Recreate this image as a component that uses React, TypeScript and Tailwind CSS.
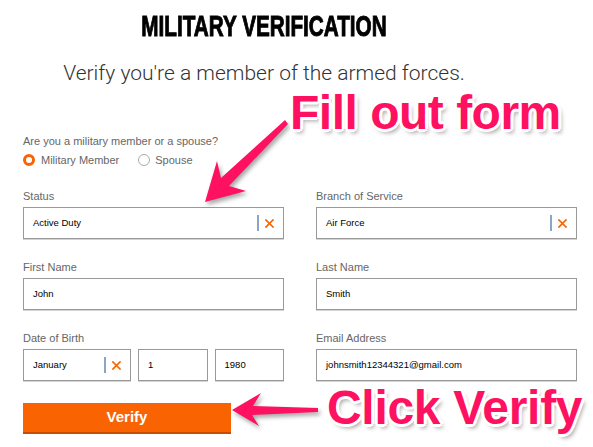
import React from "react";

const ORANGE = "#f96302";

function ClearX({ className = "" }: { className?: string }) {
  return (
    <svg width="9" height="9" viewBox="0 0 9 9" className={className}>
      <path d="M1 1 L8 8 M8 1 L1 8" stroke={ORANGE} strokeWidth="1.7" strokeLinecap="square" />
    </svg>
  );
}

function Field({
  label,
  value,
  clear,
}: {
  label: string;
  value: string;
  clear?: boolean;
}) {
  return (
    <div className="flex flex-col">
      <div className="text-[11px] leading-[14px] text-[#666] mb-[4px]">{label}</div>
      <Box value={value} clear={clear} />
    </div>
  );
}

function Box({ value, clear, className = "" }: { value: string; clear?: boolean; className?: string }) {
  return (
    <div
      className={`h-[32px] border border-[#999] shadow-[0_1px_0_#d4d4d4] flex items-center pl-[9px] pr-[9px] bg-white ${className}`}
    >
      <span className="flex-1 text-[9.5px] text-black">{value}</span>
      {clear && (
        <div className="flex items-center gap-[6px]">
          <div className="w-[2px] h-[16px] bg-[#8ba6c4]" />
          <ClearX />
        </div>
      )}
    </div>
  );
}

export default function App() {
  const annot =
    "[text-shadow:3px_0_0_#fff,-3px_0_0_#fff,0_3px_0_#fff,0_-3px_0_#fff,2px_2px_0_#fff,-2px_-2px_0_#fff,2px_-2px_0_#fff,-2px_2px_0_#fff,3px_4px_4px_rgba(0,0,0,0.35)]";
  return (
    <div
      className="relative w-[593px] h-[447px] bg-white overflow-hidden"
      style={{ fontFamily: '"Liberation Sans", Arial, sans-serif' }}
    >
      <div className="pl-[23px] pt-[9px]">
        <div className="w-[482px] text-center">
          <div className="text-[30px] leading-[34px] font-bold text-black scale-x-[0.69] whitespace-nowrap [-webkit-text-stroke:1px_black]">
            MILITARY VERIFICATION
          </div>
          <div
            className="mt-[18px] text-[21px] leading-[24px] text-[#333] font-light"
            style={{ fontFamily: 'Roboto, "Liberation Sans", sans-serif' }}
          >
            Verify you're a member of the armed forces.
          </div>
        </div>

        <div className="mt-[49px] text-[11px] leading-[14px] text-[#666]">
          Are you a military member or a spouse?
        </div>
        <div className="mt-[4px] flex items-center h-[16px] text-[11px] text-[#666]">
          <div className="w-[12px] h-[12px] rounded-full border-[3.5px] border-[#f96302] bg-white" />
          <span className="ml-[6px]">Military Member</span>
          <div className="ml-[19px] w-[12px] h-[12px] rounded-full border border-[#aaa] bg-white" />
          <span className="ml-[5px]">Spouse</span>
        </div>

        <div className="mt-[21px] grid grid-cols-[261px_261px] gap-x-[32px] gap-y-[21px]">
          <Field label="Status" value="Active Duty" clear />
          <Field label="Branch of Service" value="Air Force" clear />
          <Field label="First Name" value="John" />
          <Field label="Last Name" value="Smith" />
          <div className="flex flex-col">
            <div className="text-[11px] leading-[14px] text-[#666] mb-[4px]">Date of Birth</div>
            <div className="flex gap-[7px]">
              <Box value="January" clear className="w-[109px]" />
              <Box value="1" className="w-[70px]" />
              <Box value="1980" className="w-[70px]" />
            </div>
          </div>
          <Field label="Email Address" value="johnsmith12344321@gmail.com" />
        </div>

        <button className="mt-[22px] w-[208px] h-[31px] bg-[#f96302] border-b-[2px] border-[#c54e00] text-white font-bold text-[15px] flex items-center justify-center">
          Verify
        </button>
      </div>

      {/* annotations */}
      <svg
        className="absolute inset-0 pointer-events-none drop-shadow-[2px_3px_2px_rgba(0,0,0,0.35)]"
        width="593"
        height="447"
      >
        <polygon
          points="205,202 217,161 221,178 285,120 288,124 229,186 246,191"
          fill="#fe1160"
        />
        <polygon
          points="232,410 261,393 253,406 318,408 318,412 252,415 259,426"
          fill="#fe1160"
        />
      </svg>
      <div
        className={`absolute left-[290px] top-[89px] text-[48px] leading-[48px] font-bold text-[#fe1160] tracking-[-0.5px] whitespace-nowrap ${annot}`}
      >
        Fill out form
      </div>
      <div
        className={`absolute left-[327px] top-[384px] text-[48px] leading-[48px] font-bold text-[#fe1160] tracking-[-0.3px] whitespace-nowrap ${annot}`}
      >
        Click Verify
      </div>
    </div>
  );
}
